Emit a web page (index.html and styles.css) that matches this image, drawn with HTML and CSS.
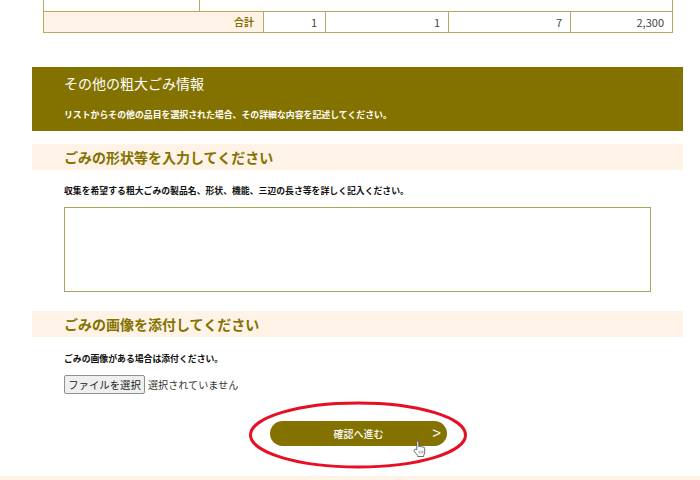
FILE: index.html
```html
<!DOCTYPE html>
<html lang="ja">
<head>
<meta charset="utf-8">
<title>その他の粗大ごみ情報</title>
<link rel="stylesheet" href="styles.css">
</head>
<body>
<div class="page">
  <div class="table-wrap">
    <table class="summary">
      <colgroup>
        <col class="c1"><col class="c2"><col class="c3"><col class="c4"><col class="c5"><col class="c6">
      </colgroup>
      <tr class="prev"><td></td><td></td><td></td><td></td><td></td><td></td></tr>
      <tr class="total">
        <th colspan="2">合計</th>
        <td>1</td><td>1</td><td>7</td><td>2,300</td>
      </tr>
    </table>
  </div>

  <main class="content">
    <header class="banner">
      <h2>その他の粗大ごみ情報</h2>
      <p>リストからその他の品目を選択された場合、その詳細な内容を記述してください。</p>
    </header>

    <section class="shape">
      <h3>ごみの形状等を入力してください</h3>
      <p class="note">収集を希望する粗大ごみの製品名、形状、機能、三辺の長さ等を詳しく記入ください。</p>
      <textarea class="detail"></textarea>
    </section>

    <section class="image">
      <h3>ごみの画像を添付してください</h3>
      <p class="note">ごみの画像がある場合は添付ください。</p>
      <div class="file">
        <button type="button" class="file-btn">ファイルを選択</button>
        <span class="file-name">選択されていません</span>
      </div>
    </section>

    <div class="actions">
      <a class="next" href="#"><span>確認へ進む</span><span class="arrow">&gt;</span></a>
      <svg class="ring" width="224" height="70" viewBox="0 0 224 70" aria-hidden="true">
        <ellipse cx="111" cy="35" rx="107.500" ry="32" fill="none" stroke="#e60f23" stroke-width="3"/>
      </svg>
      <svg class="hand" width="13" height="17" viewBox="0 0 14 19" aria-hidden="true">
        <path d="M4 11V2.200C4 .8 6.200 .8 6.200 2.200V7.500C6.600 6.800 8.300 6.800 8.500 7.800C9 7.100 10.500 7.200 10.700 8.300C11.300 7.800 12.800 8 12.800 9.300V13C12.800 15 12.200 16 11.600 17.500V18.500H5V17.500C3.800 16 2.500 14.500 1.200 12.600C.3 11 2 9.700 3.200 10.700Z" fill="#fff" stroke="#555" stroke-width="1"/>
        <path d="M6.700 12V15M8.700 12V15M10.700 12V15" stroke="#777" stroke-width=".8" fill="none"/>
      </svg>
    </div>
  </main>

  <div class="footer-band"></div>
</div>
</body>
</html>
```
FILE: styles.css
```css
* { box-sizing: border-box; }
html, body { margin: 0; padding: 0; }
body {
  width: 700px;
  height: 480px;
  overflow: hidden;
  background: #fff;
  font-family: "Noto Sans CJK JP", "Noto Sans", sans-serif;
  color: #222;
}
.page { display: flex; flex-direction: column; height: 480px; }

.table-wrap { padding: 0 28px 0 43px; height: 67px; flex: none; }
.summary {
  width: 629px;
  table-layout: fixed;
  border-collapse: collapse;
  font-size: 11px;
  margin-top: -2px;
}
.c1 { width: 156px; }
.c2 { width: 64px; }
.c3 { width: 62px; }
.c4 { width: 123px; }
.c5 { width: 122px; }
.c6 { width: 102px; }
.summary td, .summary th { border: 1px solid #b8a862; padding: 0 8px; }
.prev td { height: 13px; border-top: 0; }
.prev td:nth-child(n+3) { border-left-color: #fff; border-right-color: #fff; }
.prev td:nth-child(2) { border-right-color: #fff; }
.prev td:last-child { border-right-color: #b8a862; }
.total { height: 21px; }
.total th { background: #fff2e6; color: #847200; text-align: right; font-weight: 700; font-size: 10px; padding-right: 9px; }
.total td { text-align: right; color: #444; }

.content { margin: 0 17px 0 32px; flex: 1; }
.banner { background: #847200; height: 64px; padding: 6px 32px 0; color: #fff; }
.banner h2 { margin: 0; font-size: 14px; line-height: 21px; font-weight: 400; }
.banner p { margin: 14px 0 0; font-size: 8.900px; line-height: 14px; font-weight: 700; }

.content h3 {
  margin: 0;
  height: 26px;
  background: #fff2e6;
  color: #847200;
  font-size: 14px;
  line-height: 26px;
  font-weight: 700;
  padding-left: 32px;
}
.shape { margin-top: 13px; }
.image { margin-top: 19px; }
.note { margin: 14px 32px 0; font-size: 8.850px; line-height: 14px; font-weight: 700; color: #111; }
.image .note { margin-top: 15px; }
.detail {
  display: block;
  width: 587px;
  height: 85px;
  margin: 9px 0 0 32px;
  border: 1px solid #a9a45e;
  background: #fff;
  resize: none;
}

.file { display: flex; align-items: center; margin: 9px 0 0 32px; gap: 3px; height: 19px; }
.file-btn {
  width: 81px;
  height: 19px;
  padding: 0;
  white-space: nowrap;
  font: 400 10.400px/17px "Noto Sans CJK JP", sans-serif;
  color: #222;
  background: #efefef;
  border: 1px solid #8f8f8f;
  border-radius: 2px;
}
.file-name { font-size: 10.100px; line-height: 19px; color: #333; }

.actions { position: relative; display: flex; justify-content: center; margin-top: 27px; width: 651px; }
.next {
  display: flex;
  align-items: center;
  justify-content: center;
  position: relative;
  width: 177px;
  height: 25px;
  margin-left: 2px;
  background: #847200;
  border-radius: 13px;
  color: #fff;
  font-size: 10px;
  font-weight: 500;
  text-decoration: none;
}
.arrow { position: absolute; right: 6px; top: 2px; font-size: 15px; line-height: 20px; font-family: "Liberation Sans", sans-serif; }
.ring { position: absolute; left: 214.500px; top: -21px; }
.hand { position: absolute; left: 381px; top: 19px; }

.footer-band { height: 4px; background: #fff2e6; flex: none; }
```
